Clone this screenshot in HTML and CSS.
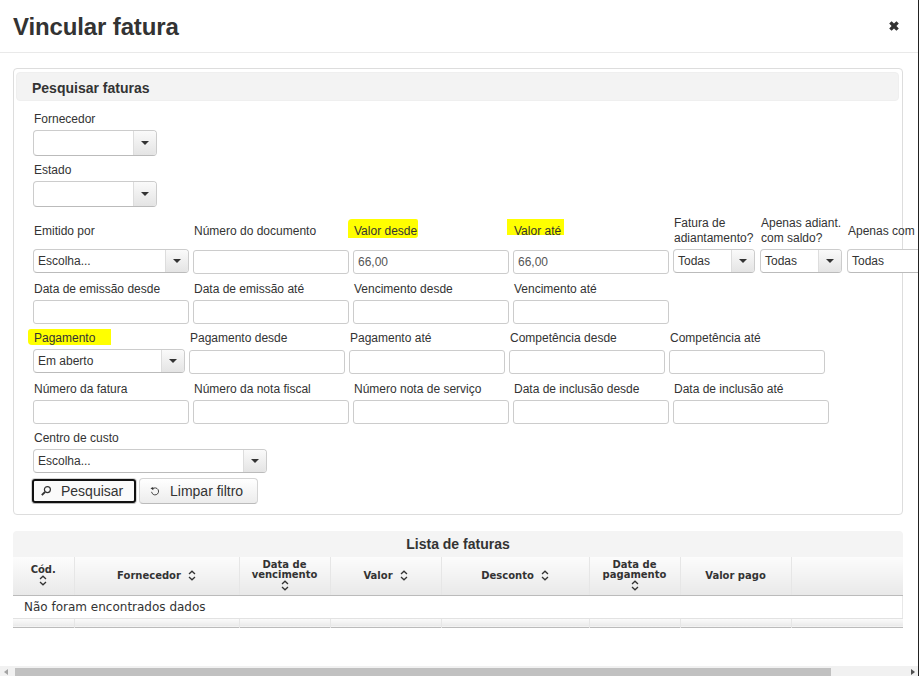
FILE: index.html
```html
<!DOCTYPE html>
<html lang="pt-BR">
<head>
  <meta charset="UTF-8">
  <title>Vincular fatura</title>
  <link rel="stylesheet" href="styles.css">
</head>
<body>
  <div class="modal">
    <header class="modal-head">
      <h1>Vincular fatura</h1>
      <svg class="close" viewBox="0 0 10 10" width="10" height="10"><path d="M2.6 .2 5 2.6 7.4 .2 9.8 2.6 7.4 5 9.8 7.4 7.4 9.8 5 7.4 2.6 9.8 .2 7.4 2.6 5 .2 2.6z"/></svg>
    </header>

    <div class="modal-body">
      <section class="panel">
        <h2>Pesquisar faturas</h2>
        <form class="filters">
          <div class="row">
            <div class="field w124">
              <label>Fornecedor</label>
              <div class="select tall"><span></span><i></i></div>
            </div>
          </div>
          <div class="row row-select row-estado">
            <div class="field w124">
              <label>Estado</label>
              <div class="select tall"><span></span><i></i></div>
            </div>
          </div>

          <div class="row row-double">
            <div class="field w156">
              <label>Emitido por</label>
              <div class="select"><span>Escolha...</span><i></i></div>
            </div>
            <div class="field w156">
              <label>Número do documento</label>
              <input type="text">
            </div>
            <div class="field w156">
              <label><span class="mark mark-desde"></span><b>Valor desde</b></label>
              <input type="text" value="66,00">
            </div>
            <div class="field w156">
              <label><span class="mark mark-ate"></span><b>Valor até</b></label>
              <input type="text" value="66,00">
            </div>
            <div class="field w82">
              <label>Fatura de adiantamento?</label>
              <div class="select"><span>Todas</span><i></i></div>
            </div>
            <div class="field w82 gap1">
              <label>Apenas adiant. com saldo?</label>
              <div class="select"><span>Todas</span><i></i></div>
            </div>
            <div class="field w124 gap1">
              <label class="nowrap">Apenas com</label>
              <div class="select"><span>Todas</span><i></i></div>
            </div>
          </div>

          <div class="row">
            <div class="field w156"><label>Data de emissão desde</label><input type="text"></div>
            <div class="field w156"><label>Data de emissão até</label><input type="text"></div>
            <div class="field w156"><label>Vencimento desde</label><input type="text"></div>
            <div class="field w156"><label>Vencimento até</label><input type="text"></div>
          </div>

          <div class="row row-select">
            <div class="field w152">
              <label><span class="mark mark-pag"></span><b>Pagamento</b></label>
              <div class="select"><span>Em aberto</span><i></i></div>
            </div>
            <div class="field w156"><label>Pagamento desde</label><input type="text"></div>
            <div class="field w156"><label>Pagamento até</label><input type="text"></div>
            <div class="field w156"><label>Competência desde</label><input type="text"></div>
            <div class="field w156"><label>Competência até</label><input type="text"></div>
          </div>

          <div class="row">
            <div class="field w156"><label>Número da fatura</label><input type="text"></div>
            <div class="field w156"><label>Número da nota fiscal</label><input type="text"></div>
            <div class="field w156"><label>Número nota de serviço</label><input type="text"></div>
            <div class="field w156"><label>Data de inclusão desde</label><input type="text"></div>
            <div class="field w156"><label>Data de inclusão até</label><input type="text"></div>
          </div>

          <div class="row row-select">
            <div class="field w234">
              <label>Centro de custo</label>
              <div class="select"><span>Escolha...</span><i></i></div>
            </div>
          </div>

          <div class="buttons">
            <button type="button" class="btn btn-focus">
              <svg viewBox="0 0 12 12" width="12" height="12"><circle cx="7.4" cy="4.6" r="3" fill="none" stroke="#333" stroke-width="1.2"/><path d="M5 7 1.8 10.2" stroke="#333" stroke-width="1.8" fill="none"/></svg>
              Pesquisar
            </button>
            <button type="button" class="btn btn-clear">
              <svg viewBox="0 0 12 12" width="10" height="10"><path d="M3.2 3.4A4.2 4.2 0 1 1 1.9 7" fill="none" stroke="#333" stroke-width="1.1"/><path d="M.6 2.8 3.8 1.2 4 5z" fill="#333"/></svg>
              Limpar filtro
            </button>
          </div>
        </form>
      </section>

      <section class="list">
        <h3>Lista de faturas</h3>
        <table>
          <colgroup>
            <col class="c-cod"><col class="c-forn"><col class="c-venc"><col class="c-valor">
            <col class="c-desc"><col class="c-pag"><col class="c-pago"><col>
          </colgroup>
          <thead>
            <tr>
              <th>Cód.<svg class="sort block" viewBox="0 0 8 11" width="8" height="11"><path d="M1 4 4 1.2 7 4M1 7 4 9.8 7 7"/></svg></th>
              <th>Fornecedor<svg class="sort" viewBox="0 0 8 11" width="8" height="11"><path d="M1 4 4 1.2 7 4M1 7 4 9.8 7 7"/></svg></th>
              <th>Data de<br>vencimento<svg class="sort block" viewBox="0 0 8 11" width="8" height="11"><path d="M1 4 4 1.2 7 4M1 7 4 9.8 7 7"/></svg></th>
              <th>Valor<svg class="sort" viewBox="0 0 8 11" width="8" height="11"><path d="M1 4 4 1.2 7 4M1 7 4 9.8 7 7"/></svg></th>
              <th>Desconto<svg class="sort" viewBox="0 0 8 11" width="8" height="11"><path d="M1 4 4 1.2 7 4M1 7 4 9.8 7 7"/></svg></th>
              <th>Data de<br>pagamento<svg class="sort block" viewBox="0 0 8 11" width="8" height="11"><path d="M1 4 4 1.2 7 4M1 7 4 9.8 7 7"/></svg></th>
              <th>Valor pago</th>
              <th></th>
            </tr>
          </thead>
          <tbody>
            <tr><td colspan="8" class="empty">Não foram encontrados dados</td></tr>
          </tbody>
          <tfoot>
            <tr><td></td><td></td><td></td><td></td><td></td><td></td><td></td><td></td></tr>
          </tfoot>
        </table>
      </section>
    </div>

    <div class="hscroll">
      <span class="arrow arrow-left"></span>
      <span class="track"><span class="thumb"></span></span>
      <span class="arrow arrow-right"></span>
    </div>
  </div>
</body>
</html>
```

FILE: styles.css
```css
* { box-sizing: border-box; }

body {
  margin: 0;
  background: #fff;
  color: #333;
  font-family: "Liberation Sans", Arial, sans-serif;
  font-size: 12px;
  overflow: hidden;
}

.modal {
  width: 919px;
  height: 676px;
  border-right: 1px solid #222;
  display: flex;
  flex-direction: column;
  overflow: hidden;
}

/* Header */
.modal-head {
  height: 53px;
  flex: none;
  padding: 0 19px 0 13px;
  border-bottom: 1px solid #e9e9e9;
  display: flex;
  justify-content: space-between;
  align-items: center;
}
.modal-head h1 { margin: 0 0 -1px; font-size: 24px; font-weight: bold; letter-spacing: -.13px; color: #333; }
.close { fill: #333; margin-top: -1px; }

.modal-body { flex: 1; padding: 15px 15px 0 13px; min-height: 0; }

/* Search panel */
.panel {
  width: 890px;
  height: 447px;
  border: 1px solid #ddd;
  border-radius: 4px;
  padding: 3px 3px 0 2px;
}
.panel h2 {
  margin: 0;
  height: 29px;
  line-height: 30px;
  padding-left: 15px;
  background: #f3f3f3;
  border: 1px solid #efefef;
  border-radius: 4px;
  font-size: 14px;
  font-weight: bold;
}

.filters { padding: 10px 0 0 17px; }
.row { display: flex; gap: 4px; margin-bottom: 7px; }
.row-select { margin-top: -1px; }
.row-select label { margin-bottom: 4px; }
.row-estado { margin-bottom: 10px; }
.row-estado .select.tall { margin-top: -1px; }
.field { flex: none; }
.gap1 { margin-left: 1px; }
.w82 { width: 82px; }
.w124 { width: 124px; }
.w152 { width: 152px; }
.w156 { width: 156px; }
.w234 { width: 234px; }

label {
  display: block;
  position: relative;
  height: 16px;
  line-height: 16px;
  margin-bottom: 3px;
  padding-left: 1px;
  color: #333;
}
label b { position: relative; font-weight: normal; }
.row-double label { height: 30px; line-height: 15px; padding-bottom: 2px; display: flex; align-items: center; }
.nowrap { white-space: nowrap; }

/* Yellow marker strokes */
.mark { position: absolute; background: #ffff00; }
.mark-desde { left: -5px; top: 2px; width: 70px; height: 19px; border-radius: 4px 2px 3px 0; }
.mark-ate { left: -6px; top: 2px; width: 57px; height: 16px; }
.mark-pag { left: -5px; top: -1px; width: 83px; height: 16px; border-radius: 3px 0 0 4px; }

input {
  display: block;
  width: 100%;
  height: 24px;
  padding: 0 4px;
  border: 1px solid #ccc;
  border-radius: 3px;
  background: #fff;
  color: #555;
  font: 12px "Liberation Sans", Arial, sans-serif;
}

.select {
  display: flex;
  height: 24px;
  margin-top: -1px;
  border: 1px solid #ccc;
  border-bottom-color: #bbb;
  border-radius: 4px;
  background: #fff;
  overflow: hidden;
}
.select.tall { height: 26px; margin-top: 0; }
.select span { flex: 1; padding-left: 4px; line-height: 22px; color: #333; white-space: nowrap; overflow: hidden; }
.select i {
  flex: none;
  width: 23px;
  position: relative;
  background: linear-gradient(#fafafa, #e4e4e4);
  border-left: 1px solid #ddd;
}
.select i::after {
  content: "";
  position: absolute;
  left: 7px;
  top: 50%;
  margin-top: -2px;
  border: 4px solid transparent;
  border-bottom: 0;
  border-top-color: #333;
}

/* Buttons */
.buttons { display: flex; gap: 2px; margin: -2px 0 0 -2px; align-items: flex-start; }
.btn {
  height: 26px;
  padding: 0;
  display: flex;
  align-items: center;
  border: 1px solid #d4d4d4;
  border-bottom-color: #bbb;
  border-radius: 4px;
  background: linear-gradient(#fff, #ececec);
  color: #333;
  font: 14px "Liberation Sans", Arial, sans-serif;
}
.btn-focus { width: 106px; padding-left: 8px; outline: 2px solid #111; outline-offset: -3px; background: #fafafa; }
.btn-focus svg { margin-right: 9px; }
.btn-clear { width: 119px; padding-left: 10px; }
.btn-clear svg { margin-right: 10px; }

/* List */
.list { width: 890px; margin-top: 16px; }
.list h3 {
  margin: 0;
  height: 26px;
  line-height: 26px;
  text-align: center;
  background: #f4f4f4;
  border-radius: 4px 4px 0 0;
  font-size: 14px;
  font-weight: bold;
}
table {
  width: 890px;
  table-layout: fixed;
  border-collapse: collapse;
  font-family: "DejaVu Sans", Verdana, sans-serif;
  border-bottom: 1px solid #bbb;
}
.c-cod { width: 61px; }
.c-forn { width: 165px; }
.c-venc { width: 91px; }
.c-valor { width: 111px; }
.c-desc { width: 148px; }
.c-pag { width: 91px; }
.c-pago { width: 111px; }

th {
  height: 38px;
  padding: 0 2px;
  border-left: 1px solid #e6e6e6;
  border-bottom: 1px solid #bbb;
  background: linear-gradient(#fcfcfc, #e9e9e9);
  color: #333;
  font-size: 10px;
  line-height: 10px;
  font-weight: bold;
  text-align: center;
}
th:first-child { border-left: 0; }
.sort { fill: none; stroke: #333; stroke-width: 1.3; margin-left: 7px; vertical-align: middle; }
.sort.block { display: block; margin: 0 auto; }

.empty {
  height: 23px;
  padding-left: 11px;
  border-bottom: 1px solid #e2e2e2;
  border-right: 1px solid #e8e8e8;
  color: #333;
  font-size: 12px;
}
tfoot td {
  height: 9px;
  padding: 0;
  border-left: 1px solid #e6e6e6;
  background: linear-gradient(#fcfcfc, #e9e9e9);
}
tfoot td:first-child { border-left: 0; }

/* Scrollbar */
.hscroll { flex: none; height: 10px; display: flex; background: #f1f1f1; }
.arrow { flex: none; width: 15px; position: relative; }
.arrow::after { content: ""; position: absolute; top: 3px; border: 3px solid transparent; }
.arrow-left::after { left: 4px; border-left: 0; border-right: 4px solid #a3a3a3; }
.arrow-right::after { left: 8px; border-right: 0; border-left: 4px solid #505050; }
.track { flex: 1; padding-top: 2px; }
.thumb { display: block; width: 816px; height: 8px; background: #c1c1c1; }
```
